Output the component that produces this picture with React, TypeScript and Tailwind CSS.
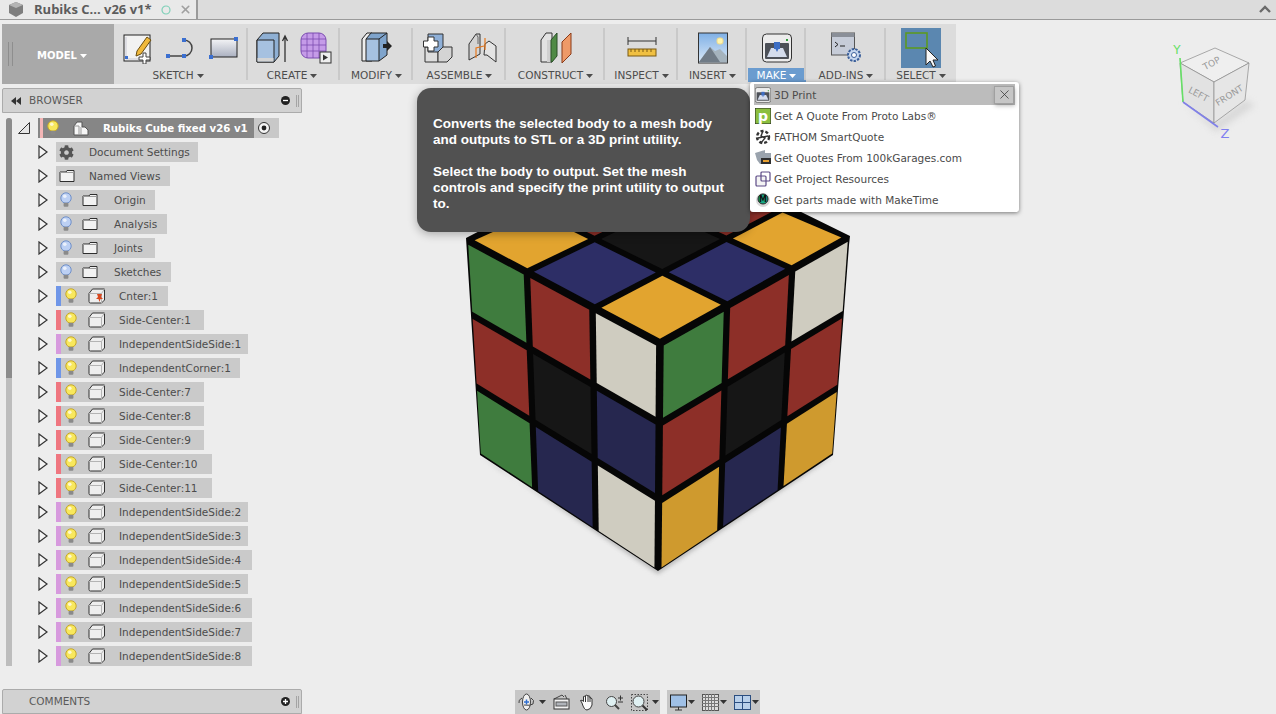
import { FaCog } from 'react-icons/fa';
import { X } from 'lucide-react';
import type { FC, ReactNode } from 'react';

type Pt = [number, number];

// ---------- small tree icons ----------
const Bulb: FC<{ blue?: boolean }> = ({ blue }) => (
  <svg width="12" height="16" viewBox="0 0 12 16" className="shrink-0">
    <circle cx="6" cy="6" r="5.2" fill={blue ? '#bcd0f4' : '#f8e85c'} stroke={blue ? '#6f8fc8' : '#c8a92a'} />
    <circle cx="4.8" cy="4.3" r="1.8" fill="#ffffff" opacity="0.7" />
    <rect x="3.6" y="10.8" width="4.8" height="4" rx="1" fill="#8a8a8a" />
  </svg>
);

const Folder = () => (
  <svg width="16" height="14" viewBox="0 0 16 14" className="shrink-0">
    <path d="M1 3V12.5H15V1.5H8L7 3Z" fill="#f2f2f2" stroke="#2e2e2e" />
    <path d="M1 3.5H15" stroke="#9a9a9a" />
  </svg>
);

const BodyBox: FC<{ pin?: boolean }> = ({ pin }) => (
  <svg width="18" height="16" viewBox="0 0 18 16" className="shrink-0">
    <path d="M1 5.5L4.5 1H16.5V12L13.5 15H2.5Q1 15 1 13.5Z" fill="#eeeeee" stroke="#333333" />
    <path d="M1 5.5H13.5V15M13.5 5.5L16.5 1" fill="none" stroke="#b4b4b4" />
    {pin && <path d="M9 6H14L13 9L15 11H12.5L11.5 14L10.5 11H8L10 9Z" fill="#d9481f" />}
  </svg>
);

const Expand = () => (
  <svg width="10" height="14" viewBox="0 0 10 14" className="shrink-0">
    <path d="M1 1L9 7L1 13Z" fill="#f4f4f4" stroke="#333333" strokeWidth="1.2" />
  </svg>
);

const PanelBar: FC<{ label: string; sign: '+' | '-'; rewind?: boolean }> = ({ label, sign, rewind }) => (
  <div className="flex h-[25px] w-[300px] items-center rounded-t-[2px] border border-[#ababab] bg-[#d2d2d2] text-[10.5px] text-[#5a5a5a]">
    <span className="flex w-[26px] justify-center">
      {rewind && (
        <svg width="10" height="8" viewBox="0 0 10 8">
          <path d="M5 0V8L0 4ZM10 0V8L5 4Z" fill="#333333" />
        </svg>
      )}
    </span>
    <span className="flex-1 pt-[1px]">{label}</span>
    <svg width="9" height="9" viewBox="0 0 9 9" className="mr-[6px]">
      <circle cx="4.5" cy="4.5" r="4.5" fill="#222222" />
      <path d={sign === '+' ? 'M2 4.5H7M4.5 2V7' : 'M2 4.5H7'} stroke="#ffffff" strokeWidth="1.3" />
    </svg>
    <span className="mr-[2px] h-[12px] w-[3px] border-x border-[#a4a4a4]" />
  </div>
);

// ---------- browser tree ----------
const BAR_BLUE = 'bg-[#6f96e8]';
const BAR_RED = 'bg-[#ef7680]';
const BAR_PURPLE = 'bg-[#d79ade]';

const components: { name: string; bar: string; width: string; pin?: boolean }[] = [
  { name: 'Cnter:1', bar: BAR_BLUE, width: 'w-[112px]', pin: true },
  { name: 'Side-Center:1', bar: BAR_RED, width: 'w-[148px]' },
  { name: 'IndependentSideSide:1', bar: BAR_PURPLE, width: 'w-[192px]' },
  { name: 'IndependentCorner:1', bar: BAR_BLUE, width: 'w-[184px]' },
  { name: 'Side-Center:7', bar: BAR_RED, width: 'w-[148px]' },
  { name: 'Side-Center:8', bar: BAR_RED, width: 'w-[148px]' },
  { name: 'Side-Center:9', bar: BAR_RED, width: 'w-[148px]' },
  { name: 'Side-Center:10', bar: BAR_RED, width: 'w-[156px]' },
  { name: 'Side-Center:11', bar: BAR_RED, width: 'w-[156px]' },
  { name: 'IndependentSideSide:2', bar: BAR_PURPLE, width: 'w-[192px]' },
  { name: 'IndependentSideSide:3', bar: BAR_PURPLE, width: 'w-[192px]' },
  { name: 'IndependentSideSide:4', bar: BAR_PURPLE, width: 'w-[196px]' },
  { name: 'IndependentSideSide:5', bar: BAR_PURPLE, width: 'w-[192px]' },
  { name: 'IndependentSideSide:6', bar: BAR_PURPLE, width: 'w-[196px]' },
  { name: 'IndependentSideSide:7', bar: BAR_PURPLE, width: 'w-[196px]' },
  { name: 'IndependentSideSide:8', bar: BAR_PURPLE, width: 'w-[196px]' },
];

const folders: { name: string; width: string }[] = [
  { name: 'Origin', width: 'w-[99px]' },
  { name: 'Analysis', width: 'w-[111px]' },
  { name: 'Joints', width: 'w-[99px]' },
  { name: 'Sketches', width: 'w-[115px]' },
];

const TreeRow: FC<{ width: string; children: ReactNode }> = ({ width, children }) => (
  <div className="flex h-[20px] items-center">
    <span className="flex w-[18px] justify-start">
      <Expand />
    </span>
    <div className={`flex h-full items-center bg-[#cacaca] text-[10.5px] text-[#4c4c4c] ${width}`}>{children}</div>
  </div>
);

const BrowserTree = () => (
  <div className="mt-[5px] flex h-[548px] pl-[6px]">
    <div className="flex h-full w-[6px] flex-col rounded-t-[3px] bg-[#bdbdbd]">
      <div className="h-[260px] rounded-t-[3px] bg-[#8c8c8c]" />
    </div>
    <div className="ml-[26px] flex flex-col gap-[4px]">
      <div className="-ml-[20px] flex h-[20px] items-center">
        <svg width="12" height="12" viewBox="0 0 12 12" className="mr-[8px] shrink-0">
          <path d="M11.5 0.5V11.5H0.5Z" fill="#e6e6e6" stroke="#333333" />
        </svg>
        <div className="flex h-full w-[241px] items-center bg-[#c8c8c8]">
          <div className="flex h-full w-[216px] items-center bg-[#868686] text-[10.2px] font-bold text-white">
            <span className="ml-[2px] h-full w-[3px] bg-[#f4b6b6]" />
            <span className="ml-[4px]"><Bulb /></span>
            <svg width="16" height="15" viewBox="0 0 16 15" className="ml-[14px] shrink-0">
              <path d="M1 5L4 1H9V6H12L15 9V14H1Z" fill="#f6f6f6" stroke="#555555" />
              <path d="M8 6V14M1 5H6V14" fill="none" stroke="#999999" />
            </svg>
            <span className="ml-[14px] whitespace-nowrap pt-[2px]">Rubiks Cube fixed v26 v1</span>
          </div>
          <svg width="14" height="14" viewBox="0 0 14 14" className="ml-[3px]">
            <circle cx="7" cy="7" r="5.5" fill="#f4f4f4" stroke="#333333" />
            <circle cx="7" cy="7" r="2.4" fill="#222222" />
          </svg>
        </div>
      </div>
      <TreeRow width="w-[142px]">
        <FaCog className="ml-[3px] text-[15px] text-[#555555]" />
        <span className="ml-[15px] whitespace-nowrap pt-[2px]">Document Settings</span>
      </TreeRow>
      <TreeRow width="w-[114px]">
        <span className="ml-[3px]"><Folder /></span>
        <span className="ml-[14px] whitespace-nowrap pt-[2px]">Named Views</span>
      </TreeRow>
      {folders.map((f) => (
        <TreeRow key={f.name} width={f.width}>
          <span className="ml-[4px]"><Bulb blue /></span>
          <span className="ml-[10px]"><Folder /></span>
          <span className="ml-[16px] whitespace-nowrap pt-[2px]">{f.name}</span>
        </TreeRow>
      ))}
      {components.map((c) => (
        <TreeRow key={c.name} width={c.width}>
          <span className={`h-full w-[5px] ${c.bar}`} />
          <span className="ml-[4px]"><Bulb /></span>
          <span className="ml-[11px]"><BodyBox pin={c.pin} /></span>
          <span className="ml-[13px] whitespace-nowrap pt-[2px]">{c.name}</span>
        </TreeRow>
      ))}
    </div>
  </div>
);

// ---------- toolbar icons ----------
const SketchIcon = () => (
  <svg width="30" height="32" viewBox="0 0 30 32">
    <rect x="1" y="3" width="26" height="26" fill="#f2f2f2" stroke="#222222" />
    <path d="M3 27V5M3 27H25" stroke="#c8c8d4" />
    <rect x="2" y="24" width="3" height="3" fill="#3b6fd0" />
    <path d="M14 19L24 5L28 8L18 22L13 24Z" fill="#f0b93c" stroke="#6a4d10" />
    <path d="M16 25H20V21H23V25H27V28H23V32H20V28H16Z" fill="#ffffff" stroke="#444444" />
  </svg>
);

const LineIcon = () => (
  <svg width="32" height="24" viewBox="0 0 32 24">
    <path d="M4 20H19A8 8 0 0 0 19 4" fill="none" stroke="#444444" strokeWidth="1.5" />
    <rect x="1" y="18" width="4" height="4" fill="#3b6fd0" />
    <rect x="17" y="18" width="4" height="4" fill="#3b6fd0" />
    <rect x="17" y="2" width="4" height="4" fill="#3b6fd0" />
  </svg>
);

const RectIcon = () => (
  <svg width="30" height="24" viewBox="0 0 30 24">
    <defs>
      <linearGradient id="rectfill" x1="0" y1="0" x2="0" y2="1">
        <stop offset="0" stopColor="#f4f4f6" />
        <stop offset="1" stopColor="#aab0c0" />
      </linearGradient>
    </defs>
    <rect x="2" y="3" width="26" height="18" fill="url(#rectfill)" stroke="#222222" />
    <rect x="25" y="1" width="4" height="4" fill="#3b6fd0" />
    <rect x="0" y="19" width="4" height="4" fill="#3b6fd0" />
  </svg>
);

const BLUE_FACE = '#a6c1e0';

const BoxIcon = () => (
  <svg width="32" height="32" viewBox="0 0 32 32">
    <path d="M1 8L7 1H23V24L18 30H1Z" fill="#8fb0d4" stroke="#222222" />
    <path d="M1 8H18V30H1Z" fill={BLUE_FACE} stroke="#222222" />
    <rect x="1.5" y="26" width="16" height="3.5" fill="#d4d4d4" />
    <path d="M29 30V5M26.5 9L29 4L31.5 9" fill="none" stroke="#333333" strokeWidth="1.3" />
  </svg>
);

const MeshIcon = () => (
  <svg width="32" height="32" viewBox="0 0 32 32">
    <rect x="1" y="1" width="25" height="25" rx="7" fill="#c59be8" stroke="#7b4cb0" />
    <path d="M1 7H26M1 13H26M1 19H26M7 1V26M13 1V26M19 1V26" stroke="#7b4cb0" strokeWidth="0.8" />
    <rect x="20" y="20" width="11" height="11" fill="#eeeeee" stroke="#333333" />
    <path d="M23 22.5L28 25.5L23 28.5Z" fill="#333333" />
  </svg>
);

const ModifyIcon = () => (
  <svg width="32" height="32" viewBox="0 0 32 32">
    <path d="M1 29V7L6 1H11V29Z" fill="#eeeeee" stroke="#222222" />
    <path d="M5 7L10 1H26V23L18 29M18 7L26 1" fill="#7fa4cc" stroke="#222222" />
    <path d="M5 7H18V29H5Z" fill={BLUE_FACE} stroke="#222222" />
    <path d="M22 12H26V9L31 14L26 19V16H22Z" fill="#222222" />
  </svg>
);

const AssembleIcon = () => (
  <svg width="30" height="32" viewBox="0 0 30 32">
    <path d="M2 15H15V30H2Z" fill="#dddddd" stroke="#333333" />
    <path d="M15 20L20 15H29V25L24 30H15Z" fill="#d4d4d4" stroke="#333333" />
    <path d="M5 2H20V15L15 20H5Z" fill="#8fb0d8" stroke="#333333" />
    <path d="M5 9H0.5V15H5V19H11V15H15V9H11V5H5Z" fill="#ffffff" stroke="#333333" />
  </svg>
);

const JointIcon = () => (
  <svg width="30" height="32" viewBox="0 0 30 32">
    <path d="M2 25V12L9 2H13V22L2 28Z" fill="#d4d4d4" stroke="#333333" />
    <path d="M18 12L22 9L29 14V30L20 23H17Z" fill="#e4e4e4" stroke="#333333" />
    <path d="M9 2L11 5V12" fill="none" stroke="#666666" />
    <path d="M18 6V18M9 26L9 16L17 14" fill="none" stroke="#e8781c" strokeWidth="1.2" />
  </svg>
);

const ConstructIcon = () => (
  <svg width="32" height="32" viewBox="0 0 32 32">
    <path d="M1 30V8L6 1H12V30Z" fill="#e2e2e2" stroke="#333333" />
    <path d="M7 8V30H12V8Z" fill="#d0d0d0" />
    <path d="M11 8L17 1V24L12 30H11Z" fill="#4f8a45" stroke="#2a4f28" />
    <path d="M22 10L31 1V22L22 31Z" fill="#ee9a68" stroke="#8a3a18" />
  </svg>
);

const InspectIcon = () => (
  <svg width="30" height="24" viewBox="0 0 30 24">
    <path d="M1 5H29M1 1V9M29 1V9" fill="none" stroke="#333333" />
    <rect x="1" y="13" width="28" height="7" fill="#f0c042" stroke="#7a5a12" />
    <path d="M4 13V16M8 13V16M12 13V16M16 13V16M20 13V16M24 13V16" stroke="#7a5a12" />
  </svg>
);

const InsertIcon = () => (
  <svg width="30" height="32" viewBox="0 0 30 32">
    <defs>
      <linearGradient id="skyfill" x1="0" y1="0" x2="0" y2="1">
        <stop offset="0" stopColor="#7fb0e6" />
        <stop offset="1" stopColor="#dbe9f6" />
      </linearGradient>
    </defs>
    <rect x="0.5" y="1" width="29" height="30" fill="url(#skyfill)" stroke="#333333" />
    <rect x="19" y="6" width="6" height="6" rx="2" fill="#fff6b0" stroke="#eed98a" />
    <path d="M1 30L12 15L17 19L22 17L29 24V30Z" fill="#a5b3bd" />
    <path d="M1 30L12 15L22 30Z" fill="#707b86" />
  </svg>
);

const PrinterIcon: FC<{ size?: number }> = ({ size = 30 }) => (
  <svg width={size} height={size} viewBox="0 0 30 30">
    <rect x="0.5" y="1" width="29" height="28" rx="4" fill="#ececec" stroke="#333333" />
    <rect x="3" y="10" width="24" height="16" rx="1" fill="#4d5158" />
    <path d="M5 24L9 15H21L25 24Z" fill="#d4dcec" />
    <rect x="12" y="9" width="6" height="7" fill="#3d6ec4" />
    <path d="M13.5 16H16.5L15 19Z" fill="#3d6ec4" />
    <rect x="24" y="6" width="2" height="2" fill="#2f9a3a" />
  </svg>
);

const AddInsIcon = () => (
  <svg width="30" height="32" viewBox="0 0 30 32">
    <rect x="0.5" y="1" width="23" height="22" fill="#c6ccd8" stroke="#555555" />
    <rect x="0.5" y="1" width="23" height="4" fill="#8a8f98" />
    <path d="M4 10L7 12.5L4 15M9 14H14" fill="none" stroke="#222222" />
    <circle cx="23" cy="23" r="6" fill="#c4d6ee" stroke="#3b5f9a" strokeWidth="2" strokeDasharray="2.4 1.2" />
    <circle cx="23" cy="23" r="2.5" fill="#ffffff" stroke="#3b5f9a" />
  </svg>
);

const SelectIcon = () => (
  <div className="relative h-[40px] w-[40px] bg-[#5b87b0]">
    <svg width="40" height="40" viewBox="0 0 40 40" className="absolute inset-0">
      <rect x="5" y="5" width="21" height="15" fill="none" stroke="#5c9a22" strokeWidth="1.6" />
      <path d="M25 20V37L29 33L32 39L34.5 38L32 32H37Z" fill="#f8f8f8" stroke="#222222" />
    </svg>
  </div>
);

const Caret: FC<{ className?: string }> = ({ className }) => (
  <svg width="7" height="4" viewBox="0 0 7 4" className={`ml-[3px] ${className ?? ''}`}>
    <path d="M0 0H7L3.5 4Z" fill="currentColor" />
  </svg>
);

const ToolGroup: FC<{
  label: string;
  width: string;
  active?: boolean;
  last?: boolean;
  gap?: string;
  shift?: string;
  children: ReactNode;
}> = ({ label, width, active, last, gap = 'gap-[12px]', shift = '', children }) => (
  <div className={`relative flex h-full shrink-0 flex-col items-center ${width}`}>
    <div className={`flex h-[44px] items-center justify-center pt-[4px] ${gap}`}>{children}</div>
    <div
      className={`flex h-[14px] items-center justify-center pt-[2px] text-[10.5px] ${shift} ${
        active ? 'w-[58px] bg-[#6b9ccf] text-white' : 'text-[#4c4c4c]'
      }`}
    >
      {label}
      <Caret />
    </div>
    {!last && <span className="absolute top-[4px] right-0 h-[52px] w-[2px] bg-[#c9c9c9]" />}
  </div>
);

const Toolbar = () => (
  <div className="ml-[2px] flex h-[60px] w-[954px] bg-[#dcdcdc]">
    <div className="relative flex h-full w-[112px] shrink-0 items-center justify-center bg-[#a9a9a9] pt-[3px] pl-[8px] text-[10px] font-bold text-white">
      <span className="absolute top-[18px] left-[6px] h-[24px] w-[5px] border-x border-[#8e8e8e]" />
      MODEL
      <Caret />
    </div>
    <ToolGroup label="SKETCH" width="w-[134px]" shift="-translate-x-[3px]">
      <SketchIcon />
      <LineIcon />
      <RectIcon />
    </ToolGroup>
    <ToolGroup label="CREATE" width="w-[92px]" shift="-translate-x-[2px]">
      <BoxIcon />
      <MeshIcon />
    </ToolGroup>
    <ToolGroup label="MODIFY" width="w-[73px]">
      <ModifyIcon />
    </ToolGroup>
    <ToolGroup label="ASSEMBLE" width="w-[93px]" gap="gap-[14px]">
      <AssembleIcon />
      <JointIcon />
    </ToolGroup>
    <ToolGroup label="CONSTRUCT" width="w-[99px]">
      <ConstructIcon />
    </ToolGroup>
    <ToolGroup label="INSPECT" width="w-[73px]">
      <InspectIcon />
    </ToolGroup>
    <ToolGroup label="INSERT" width="w-[69px]">
      <InsertIcon />
    </ToolGroup>
    <ToolGroup label="MAKE" width="w-[59px]" active>
      <PrinterIcon />
    </ToolGroup>
    <ToolGroup label="ADD-INS" width="w-[80px]">
      <AddInsIcon />
    </ToolGroup>
    <ToolGroup label="SELECT" width="w-[70px]" last>
      <SelectIcon />
    </ToolGroup>
  </div>
);

// ---------- rubiks cube ----------
const Y = '#e2a42f';
const Y2 = '#cf9a2e';
const N = '#2d2e66';
const N2 = '#26274f';
const K = '#161616';
const R = '#8d2f28';
const G = '#3f7c3e';
const W = '#cfccc0';

const INNER = 0.017;
const SHARED = 0.02;
const OUTER = 0.005;

// rows then columns, first corner is the top-left of the face
// edges holds the gap at the u start, u end, v start and v end of the face
const faces: { corners: [Pt, Pt, Pt, Pt]; us: number[]; vs: number[]; edges: number[]; cells: string[][] }[] = [
  {
    corners: [[467, 240], [660, 343], [658, 571], [480, 454]],
    us: [0, 0.31, 0.65, 1],
    vs: [0, 0.35, 0.685, 1],
    edges: [OUTER, SHARED, SHARED, OUTER],
    cells: [[G, R, W], [R, K, N2], [G, N2, W]],
  },
  {
    corners: [[660, 343], [849, 237], [833, 454], [658, 571]],
    us: [0, 0.355, 0.7, 1],
    vs: [0, 0.355, 0.695, 1],
    edges: [SHARED, OUTER, SHARED, OUTER],
    cells: [[G, R, W], [R, K, R], [Y2, N2, Y2]],
  },
  {
    corners: [[660, 343], [849, 237], [655, 155], [467, 240]],
    us: [0, 0.36, 0.7, 1],
    vs: [0, 0.34, 0.69, 1],
    edges: [SHARED, SHARED, SHARED, SHARED],
    cells: [[Y, N, Y], [N, K, R], [Y, R, Y]],
  },
];

const bilinear = (c: [Pt, Pt, Pt, Pt], u: number, v: number): Pt => {
  const top: Pt = [c[0][0] + (c[1][0] - c[0][0]) * u, c[0][1] + (c[1][1] - c[0][1]) * u];
  const bot: Pt = [c[3][0] + (c[2][0] - c[3][0]) * u, c[3][1] + (c[2][1] - c[3][1]) * u];
  return [top[0] + (bot[0] - top[0]) * v, top[1] + (bot[1] - top[1]) * v];
};

const Cube = () => (
  <svg width="420" height="460" viewBox="450 125 420 460" className="absolute top-[125px] left-[450px]">
    <polygon points="480,455 658,574 833,456 800,470 658,560 500,470" fill="#b8b8b8" className="blur-[2px]" />
    <polygon points="466,238 655,140 850,236 849,245 833,455 658,571 480,455" fill="#060606" />
    {faces.map((f, fi) =>
      f.cells.map((row, ri) =>
        row.map((color, ci) => {
          const u0 = f.us[ci] + (ci === 0 ? f.edges[0] : INNER);
          const u1 = f.us[ci + 1] - (ci === 2 ? f.edges[1] : INNER);
          const v0 = f.vs[ri] + (ri === 0 ? f.edges[2] : INNER);
          const v1 = f.vs[ri + 1] - (ri === 2 ? f.edges[3] : INNER);
          const pts = [
            bilinear(f.corners, u0, v0),
            bilinear(f.corners, u1, v0),
            bilinear(f.corners, u1, v1),
            bilinear(f.corners, u0, v1),
          ];
          return <polygon key={`${fi}-${ri}-${ci}`} points={pts.map((p) => p.join(',')).join(' ')} fill={color} />;
        }),
      ),
    )}
  </svg>
);

// ---------- view cube ----------
const ViewCube = () => (
  <svg width="100" height="100" viewBox="1170 40 100 100" className="absolute top-[40px] left-[1170px]">
    <polygon points="1183,102 1214,123 1245,100 1255,105 1216,132" fill="#d8d8d8" className="blur-[3px]" />
    <polygon points="1180,63 1215,48 1249,63 1214,82" fill="#efefef" stroke="#8a8a8a" strokeWidth="0.7" />
    <polygon points="1180,63 1214,82 1214,123 1183,102" fill="#e2e2e2" stroke="#8a8a8a" strokeWidth="0.7" />
    <polygon points="1214,82 1249,63 1245,100 1214,123" fill="#e6e6e6" stroke="#8a8a8a" strokeWidth="0.7" />
    <text x="1213" y="66" fontSize="9" fill="#9a9a9a" textAnchor="middle" transform="rotate(-28 1213 66)">TOP</text>
    <text x="1197" y="97" fontSize="9" fill="#9a9a9a" textAnchor="middle" transform="rotate(28 1197 97)">LEFT</text>
    <text x="1231" y="98" fontSize="9" fill="#9a9a9a" textAnchor="middle" transform="rotate(-32 1231 98)">FRONT</text>
    <path d="M1180 58L1183 102" stroke="#66e066" strokeWidth="1.6" />
    <path d="M1183 102L1218 127" stroke="#8080e8" strokeWidth="1.6" />
    <text x="1177" y="54" fontSize="12" fill="#66e066" textAnchor="middle">Y</text>
    <text x="1225" y="138" fontSize="13" fill="#8080f0" textAnchor="middle">Z</text>
  </svg>
);

// ---------- tooltip and menu ----------
const Tooltip = () => (
  <div className="absolute top-[88px] left-[417px] h-[144px] w-[333px] rounded-[14px] bg-[#515151] pt-[28px] pl-[16px] font-['Liberation_Sans',sans-serif] text-[13.5px] leading-[16px] font-bold whitespace-nowrap text-white shadow-[0_2px_10px_rgba(0,0,0,0.3)]">
    <p>
      Converts the selected body to a mesh body
      <br />
      and outputs to STL or a 3D print utility.
    </p>
    <p className="mt-[16px]">
      Select the body to output. Set the mesh
      <br />
      controls and specify the print utility to output
      <br />
      to.
    </p>
  </div>
);

const ProtoLabsIcon = () => (
  <svg width="16" height="16" viewBox="0 0 16 16">
    <rect width="16" height="16" fill="#8bbf3f" stroke="#222222" />
    <text x="8" y="13" fontSize="14" fontWeight="700" fill="#ffffff" textAnchor="middle">p</text>
  </svg>
);

const FathomIcon = () => (
  <svg width="16" height="16" viewBox="0 0 16 16">
    <circle cx="8" cy="8" r="6" fill="none" stroke="#333333" strokeWidth="2.4" strokeDasharray="3 2" />
    <path d="M8 2L6 7L10 9L6 14M3 9L13 7" fill="none" stroke="#333333" strokeWidth="1.4" />
  </svg>
);

const GaragesIcon = () => (
  <svg width="16" height="16" viewBox="0 0 16 16">
    <path d="M0 3L10 0V3H16V14H5L2 10Z" fill="#9aa3ad" />
    <rect x="6" y="8" width="10" height="6" fill="#2e2e2e" />
    <rect x="8" y="10" width="6" height="2" fill="#e8a030" />
  </svg>
);

const ResourcesIcon = () => (
  <svg width="16" height="16" viewBox="0 0 16 16">
    <rect x="1" y="5" width="10" height="10" rx="1" fill="#f4f4f4" stroke="#5c4a86" strokeWidth="1.2" />
    <rect x="6" y="1" width="9" height="9" rx="1" fill="none" stroke="#5c4a86" strokeWidth="1.2" />
  </svg>
);

const MakeTimeIcon = () => (
  <svg width="16" height="16" viewBox="0 0 16 16">
    <circle cx="8" cy="8" r="7" fill="#d8d8d8" />
    <circle cx="8" cy="7" r="5" fill="#17a884" stroke="#222222" />
    <text x="8" y="10" fontSize="8" fontWeight="700" fill="#111111" textAnchor="middle">M</text>
  </svg>
);

const menuItems: { label: string; icon: ReactNode }[] = [
  { label: 'Get A Quote From Proto Labs®', icon: <ProtoLabsIcon /> },
  { label: 'FATHOM SmartQuote', icon: <FathomIcon /> },
  { label: 'Get Quotes From 100kGarages.com', icon: <GaragesIcon /> },
  { label: 'Get Project Resources', icon: <ResourcesIcon /> },
  { label: 'Get parts made with MakeTime', icon: <MakeTimeIcon /> },
];

const MakeMenu = () => (
  <div className="absolute top-[82px] left-[750px] h-[130px] w-[269px] rounded-[3px] bg-white px-[4px] pt-[2px] text-[10.5px] text-[#4a4a4a] shadow-[0_1px_4px_rgba(0,0,0,0.5)]">
    <div className="flex h-[21px] items-center justify-between bg-[#bcbcbc] pr-[1px] pl-[1px]">
      <div className="flex items-center gap-[3px]">
        <PrinterIcon size={16} />
        <span className="pt-[3px]">3D Print</span>
      </div>
      <span className="flex h-[18px] w-[20px] items-center justify-center border border-[#a0a0a0] bg-[#c6c6c6] shadow-[1px_2px_4px_rgba(0,0,0,0.25)]">
        <X size={15} strokeWidth={1.2} color="#333333" />
      </span>
    </div>
    {menuItems.map((item) => (
      <div key={item.label} className="flex h-[21px] items-center gap-[3px] pl-[1px]">
        {item.icon}
        <span className="whitespace-nowrap pt-[3px]">{item.label}</span>
      </div>
    ))}
  </div>
);

// ---------- bottom nav bar ----------
const MiniCaret = () => (
  <svg width="7" height="4" viewBox="0 0 7 4" className="-ml-[1px]">
    <path d="M0 0H7L3.5 4Z" fill="#333333" />
  </svg>
);

const NavBar = () => (
  <div className="absolute top-[690px] left-[515px] flex h-[24px] gap-[7px]">
    <div className="flex h-full w-[145px] items-center gap-[5px] bg-[#c6c6c6] pl-[3px]">
      <svg width="17" height="18" viewBox="0 0 17 18">
        <ellipse cx="8.5" cy="9" rx="4" ry="8" fill="#f0f0f0" stroke="#444444" />
        <path d="M4 5Q0 7 1 10M13 5Q17 7 15 11Q12 13 6 12" fill="none" stroke="#444444" />
        <path d="M8.5 6.5V11.5M6 9H11" stroke="#2f6fd0" strokeWidth="1.5" />
      </svg>
      <MiniCaret />
      <svg width="17" height="16" viewBox="0 0 17 16" className="ml-[2px]">
        <path d="M1 5L9 1L11 3M12 1L14 5" fill="none" stroke="#444444" />
        <rect x="1" y="5" width="15" height="10" fill="#f2f2f2" stroke="#333333" />
        <rect x="3" y="8" width="11" height="4" fill="#b0b4ba" stroke="#555555" />
      </svg>
      <svg width="17" height="17" viewBox="0 0 17 17" className="ml-[4px]">
        <path d="M3 9L1.5 6.5Q3 5.5 4.5 7.5V2.5Q6 1.5 6.5 3V1.5Q8 0.5 9 2V2Q10.5 1 11 3V4Q12.5 3.5 13 5V11Q12 15.5 8 16Q5 16 3 9Z" fill="#fbfbfb" stroke="#333333" />
        <path d="M6.5 3V8M9 2V8M11 3V8" stroke="#333333" />
      </svg>
      <svg width="19" height="16" viewBox="0 0 19 16" className="ml-[4px]">
        <circle cx="6.5" cy="7.5" r="5" fill="#dff0f2" stroke="#444444" />
        <path d="M10 11L14 15" stroke="#444444" strokeWidth="2" />
        <path d="M13 4H18M15.5 1.5V6.5M13 8H18" stroke="#333333" />
      </svg>
      <svg width="17" height="17" viewBox="0 0 17 17" className="ml-[2px]">
        <rect x="0.5" y="0.5" width="16" height="16" fill="none" stroke="#444444" strokeDasharray="1.5 1.5" />
        <circle cx="7.5" cy="7.5" r="5.5" fill="#dff0f2" stroke="#444444" />
        <path d="M11.5 11.5L16 16" stroke="#333333" strokeWidth="2" />
      </svg>
      <MiniCaret />
    </div>
    <div className="flex h-full w-[93px] items-center gap-[2px] bg-[#c6c6c6] pl-[3px]">
      <svg width="17" height="17" viewBox="0 0 17 17">
        <rect x="0.5" y="1" width="16" height="12" fill="#9fc0e6" stroke="#222222" />
        <path d="M5 16H12M8.5 13V16" stroke="#333333" />
      </svg>
      <MiniCaret />
      <svg width="17" height="17" viewBox="0 0 17 17" className="ml-[5px]">
        <rect x="0.5" y="0.5" width="16" height="16" fill="#dddddd" stroke="#555555" />
        <path d="M3.5 0V17M6.5 0V17M9.5 0V17M12.5 0V17M0 3.5H17M0 6.5H17M0 9.5H17M0 12.5H17" stroke="#777777" />
      </svg>
      <MiniCaret />
      <svg width="17" height="15" viewBox="0 0 17 15" className="ml-[5px]">
        <rect x="0.5" y="0.5" width="16" height="14" fill="#b9d0ea" stroke="#2b4e80" />
        <path d="M8.5 0V15M0 7.5H17" stroke="#2b4e80" />
      </svg>
      <MiniCaret />
    </div>
  </div>
);

export default function App() {
  return (
    <div className="relative h-[714px] w-[1276px] overflow-hidden bg-[#ededed] font-['DejaVu_Sans',sans-serif] antialiased">
      {/* document tab strip */}
      <div className="flex h-[20px] items-stretch border-b border-[#9a9a9a] bg-[#dcdcdc]">
        <div className="flex w-[198px] items-center border-r-2 border-[#9a9a9a] bg-[#e9e9e9]">
          <svg width="16" height="16" viewBox="0 0 16 16" className="ml-[8px]">
            <path d="M1 3L8 0L15 3V11L8 15L1 11Z" fill="#7e7e7e" />
            <path d="M1 3L8 6L15 3L8 0Z" fill="#b4b4b4" />
          </svg>
          <span className="ml-[10px] font-['Open_Sans',sans-serif] text-[13px] font-bold whitespace-nowrap text-[#5c5c5c]">Rubiks C... v26 v1*</span>
          <svg width="10" height="10" viewBox="0 0 10 10" className="ml-[9px] shrink-0">
            <circle cx="5" cy="5" r="4" fill="none" stroke="#7fd0b8" strokeWidth="1.2" />
          </svg>
          <X size={13} strokeWidth={3} color="#a0a0a0" className="ml-[8px] shrink-0" />
        </div>
        <div className="flex-1" />
        <svg width="12" height="8" viewBox="0 0 12 8" className="mt-[5px] mr-[5px]">
          <path d="M1 7L6 2L11 7" fill="none" stroke="#6a6a6a" strokeWidth="2.4" />
        </svg>
      </div>

      <div className="mt-[4px]">
        <Toolbar />
      </div>

      {/* browser side panel */}
      <div className="mt-[4px] ml-[2px] flex h-[626px] flex-col">
        <PanelBar label="BROWSER" sign="-" rewind />
        <div className="-ml-[2px]">
          <BrowserTree />
        </div>
        <div className="mt-auto">
          <PanelBar label="COMMENTS" sign="+" />
        </div>
      </div>

      <Cube />
      <ViewCube />
      <NavBar />
      <Tooltip />
      <MakeMenu />
    </div>
  );
}
